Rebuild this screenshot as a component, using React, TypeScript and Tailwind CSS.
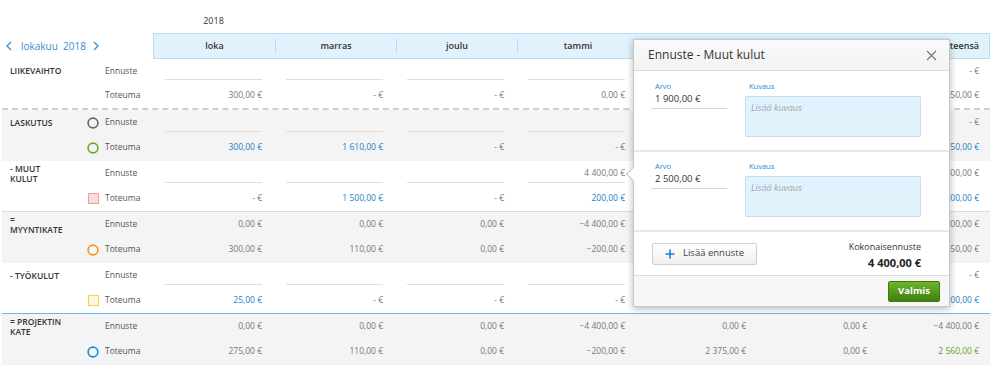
import React from "react";

type Tone = "gray" | "blue" | "green";
type Cell = { v?: string; tone?: Tone; input?: boolean };
type IconKind = "grayCircle" | "greenCircle" | "orangeCircle" | "blueCircle" | "pinkSquare" | "yellowSquare";
type Row = { type: string; icon?: IconKind; cells: Cell[]; total: Cell };
type Group = { label: string[]; bg: boolean; sep: "dashed" | "gray" | "blue" | "none"; rows: Row[] };

const months = ["loka", "marras", "joulu", "tammi", "helmi", "maalis"];

const inp = (v?: string): Cell => ({ input: true, v });
const g = (v: string): Cell => ({ v, tone: "gray" });
const b = (v: string): Cell => ({ v, tone: "blue" });

const groups: Group[] = [
  {
    label: ["LIIKEVAIHTO"],
    bg: false,
    sep: "dashed",
    rows: [
      { type: "Ennuste", cells: [inp(), inp(), inp(), inp(), inp(), inp()], total: g("- €") },
      {
        type: "Toteuma",
        cells: [g("300,00 €"), g("- €"), g("- €"), g("0,00 €"), g("2 350,00 €"), g("0,00 €")],
        total: g("2 650,00 €"),
      },
    ],
  },
  {
    label: ["LASKUTUS"],
    bg: true,
    sep: "none",
    rows: [
      { type: "Ennuste", icon: "grayCircle", cells: [inp(), inp(), inp(), inp(), inp(), inp()], total: g("- €") },
      {
        type: "Toteuma",
        icon: "greenCircle",
        cells: [b("300,00 €"), b("1 610,00 €"), g("- €"), g("- €"), b("2 440,00 €"), g("- €")],
        total: b("4 350,00 €"),
      },
    ],
  },
  {
    label: ["- MUUT", "KULUT"],
    bg: false,
    sep: "gray",
    rows: [
      {
        type: "Ennuste",
        cells: [inp(), inp(), inp(), inp("4 400,00 €"), inp(), inp()],
        total: g("4 400,00 €"),
      },
      {
        type: "Toteuma",
        icon: "pinkSquare",
        cells: [g("- €"), b("1 500,00 €"), g("- €"), b("200,00 €"), g("- €"), g("- €")],
        total: b("1 700,00 €"),
      },
    ],
  },
  {
    label: ["=", "MYYNTIKATE"],
    bg: true,
    sep: "none",
    rows: [
      {
        type: "Ennuste",
        cells: [g("0,00 €"), g("0,00 €"), g("0,00 €"), g("−4 400,00 €"), g("0,00 €"), g("0,00 €")],
        total: g("−4 400,00 €"),
      },
      {
        type: "Toteuma",
        icon: "orangeCircle",
        cells: [g("300,00 €"), g("110,00 €"), g("0,00 €"), g("−200,00 €"), g("2 450,00 €"), g("0,00 €")],
        total: g("2 650,00 €"),
      },
    ],
  },
  {
    label: ["- TYÖKULUT"],
    bg: false,
    sep: "blue",
    rows: [
      { type: "Ennuste", cells: [inp(), inp(), inp(), inp(), inp(), inp()], total: g("- €") },
      {
        type: "Toteuma",
        icon: "yellowSquare",
        cells: [b("25,00 €"), g("- €"), g("- €"), g("- €"), b("75,00 €"), g("- €")],
        total: b("100,00 €"),
      },
    ],
  },
  {
    label: ["= PROJEKTIN", "KATE"],
    bg: true,
    sep: "none",
    rows: [
      {
        type: "Ennuste",
        cells: [g("0,00 €"), g("0,00 €"), g("0,00 €"), g("−4 400,00 €"), g("0,00 €"), g("0,00 €")],
        total: g("−4 400,00 €"),
      },
      {
        type: "Toteuma",
        icon: "blueCircle",
        cells: [g("275,00 €"), g("110,00 €"), g("0,00 €"), g("−200,00 €"), g("2 375,00 €"), g("0,00 €")],
        total: { v: "2 560,00 €", tone: "green" },
      },
    ],
  },
];

const toneClass = (t?: Tone) =>
  t === "blue" ? "text-[#1b7fc8]" : t === "green" ? "text-[#5fa51e]" : "text-[#777]";

const RowIcon = ({ kind }: { kind?: IconKind }) => {
  if (!kind) return null;
  if (kind === "pinkSquare")
    return <div className="h-[11px] w-[11px] border-[1.5px] border-[#f29d9d] bg-[#f9dddd]" />;
  if (kind === "yellowSquare")
    return <div className="h-[11px] w-[11px] border-[1.5px] border-[#fbcd5a] bg-[#fff5d8]" />;
  const color = {
    grayCircle: "#666",
    greenCircle: "#6aab1c",
    orangeCircle: "#f7921e",
    blueCircle: "#1e8ad6",
  }[kind];
  return (
    <svg width="12" height="12" viewBox="0 0 12 12">
      <circle cx="6" cy="6" r="4.9" fill="none" stroke={color} strokeWidth="1.6" />
    </svg>
  );
};

const Separator = ({ kind }: { kind: Group["sep"] }) => {
  if (kind === "dashed") return <div className="h-[2px] border-t-2 border-dashed border-[#cfcfcf]" />;
  if (kind === "gray") return <div className="h-px bg-[#dcdcdc]" />;
  if (kind === "blue") return <div className="h-px bg-[#6ab6ea]" />;
  return <div className="h-px" />;
};

const ValueCell = ({ cell }: { cell: Cell }) => (
  <div className="flex w-[121px] items-center px-[12px]">
    {cell.input ? (
      <div className="flex h-[18px] w-full items-center justify-end border-b border-[#dedede] text-[#777]">
        {cell.v}
      </div>
    ) : (
      <div className={`w-full text-right ${toneClass(cell.tone)}`}>{cell.v}</div>
    )}
  </div>
);

const Popup = () => (
  <div className="absolute left-[633px] top-[39px] flex h-[268px] w-[317px] flex-col border border-[#c6c6c6] bg-white shadow-[0_2px_7px_rgba(0,0,0,0.28)]">
    <div className="absolute left-[-6px] top-[129px] h-[10px] w-[10px] rotate-45 border-b border-l border-[#c6c6c6] bg-white" />
    <div className="flex h-[31px] items-center justify-between border-b border-[#dcdcdc] bg-gradient-to-b from-[#fafafa] to-[#f3f3f3] pl-[14px] pr-[12px]">
      <span className="text-[12px] text-[#333]">Ennuste - Muut kulut</span>
      <svg width="11" height="11" viewBox="0 0 11 11">
        <path d="M1 1 L10 10 M10 1 L1 10" stroke="#777" strokeWidth="1.2" />
      </svg>
    </div>
    {["1 900,00 €", "2 500,00 €"].map((val, i) => (
      <div
        key={val}
        className={`flex border-b-2 border-[#e8e8e8] pl-[17px] pr-[28px] ${i === 0 ? "h-[81px] pt-[10px]" : "h-[80px] pt-[9px]"}`}
      >
        <div className="w-[76px]">
          <div className="h-[10px] pl-[4px] text-[7.5px] leading-[10px] text-[#2a8ad4]">Arvo</div>
          <div className="flex h-[18px] items-center border-b border-[#d6d6d6] pl-[4px] text-[9.5px] text-[#333]">
            {val}
          </div>
        </div>
        <div className="ml-[18px] flex-1">
          <div className="h-[10px] pl-[4px] text-[7.5px] leading-[10px] text-[#2a8ad4]">Kuvaus</div>
          <div className="mt-[5px] h-[41px] rounded-[1px] border border-[#bfe0f6] bg-[#e3f3fd] px-[5px] pt-[4px] text-[9px] italic text-[#9aa4ab]">
            Lisää kuvaus
          </div>
        </div>
      </div>
    ))}
    <div className="flex flex-1 items-center justify-between pl-[18px] pr-[28px]">
      <button className="flex h-[22px] w-[105px] items-center rounded-[2px] border border-[#cfcfcf] bg-gradient-to-b from-white to-[#efefef] pl-[12px] text-[9.5px] text-[#444]">
        <svg width="10" height="10" viewBox="0 0 10 10">
          <path d="M5 0.5 V9.5 M0.5 5 H9.5" stroke="#1f7fcf" strokeWidth="1.6" />
        </svg>
        <span className="ml-[8px]">Lisää ennuste</span>
      </button>
      <div className="pt-[3px] text-right">
        <div className="text-[9px] leading-[14px] text-[#333]">Kokonaisennuste</div>
        <div className="text-[11px] font-bold leading-[17px] text-[#222]">4 400,00 €</div>
      </div>
    </div>
    <div className="flex h-[31px] items-center justify-end border-t border-[#dcdcdc] bg-[#f6f6f6] pr-[9px]">
      <button className="flex h-[21px] w-[52px] items-center justify-center rounded-[2px] border border-[#3b7a10] bg-gradient-to-b from-[#6db52c] to-[#3f800f] text-[9.5px] font-bold text-white">
        Valmis
      </button>
    </div>
  </div>
);

const App = () => {
  return (
    <div className="relative h-[369px] w-[999px] overflow-hidden bg-white font-['Open_Sans',sans-serif] text-[8.5px] text-[#555]">
      <div className="flex h-[33px] pl-[153px]">
        <div className="w-[121px] pt-[14px] text-center text-[9px] leading-[14px] text-[#333]">2018</div>
      </div>
      <div className="ml-[2px] flex h-[26px] w-[988px]">
        <div className="flex w-[151px] items-center pl-[4px] text-[10px] text-[#3b8dcf]">
          <svg width="6" height="10" viewBox="0 0 6 10">
            <path d="M5 1 L1 5 L5 9" fill="none" stroke="#3b8dcf" strokeWidth="1.3" />
          </svg>
          <span className="ml-[9px]">lokakuu&nbsp;&nbsp;2018</span>
          <svg className="ml-[7px]" width="6" height="10" viewBox="0 0 6 10">
            <path d="M1 1 L5 5 L1 9" fill="none" stroke="#3b8dcf" strokeWidth="1.3" />
          </svg>
        </div>
        <div className="flex flex-1 border border-[#b9ddf5] bg-[#e2f2fd] text-[9px] font-semibold text-[#333]">
          {months.map((m, i) => (
            <div key={m} className="flex w-[121px] items-center">
              {i > 0 ? <div className="h-[14px] w-px bg-[#bcdcf3]" /> : null}
              <div className="flex-1 text-center">{m}</div>
            </div>
          ))}
          <div className="flex flex-1 items-center">
            <div className="h-[14px] w-px bg-[#bcdcf3]" />
            <div className="flex-1 pr-[10px] text-right">Yhteensä</div>
          </div>
        </div>
      </div>
      {groups.map((grp) => (
        <div
          key={grp.label.join(" ")}
          className={`ml-[2px] flex h-[51px] w-[988px] flex-col ${grp.bg ? "bg-[#f4f4f4]" : "bg-white"}`}
        >
          {grp.rows.map((row, ri) => (
            <div key={row.type} className="flex flex-1 items-center">
              <div className="w-[85px] pl-[8px] text-[8.5px] font-semibold leading-[10px] text-[#333]">
                {ri === 0 ? grp.label.map((l) => <div key={l}>{l}</div>) : null}
              </div>
              <div className="flex w-[12px] items-center justify-center">
                <RowIcon kind={row.icon} />
              </div>
              <div className="ml-[6px] w-[48px] text-[#555]">{row.type}</div>
              {row.cells.map((c, ci) => (
                <ValueCell key={ci} cell={c} />
              ))}
              <div className={`flex-1 pr-[11px] text-right ${toneClass(row.total.tone)}`}>{row.total.v}</div>
            </div>
          ))}
          <Separator kind={grp.sep} />
        </div>
      ))}
      <Popup />
    </div>
  );
};

export default App;
